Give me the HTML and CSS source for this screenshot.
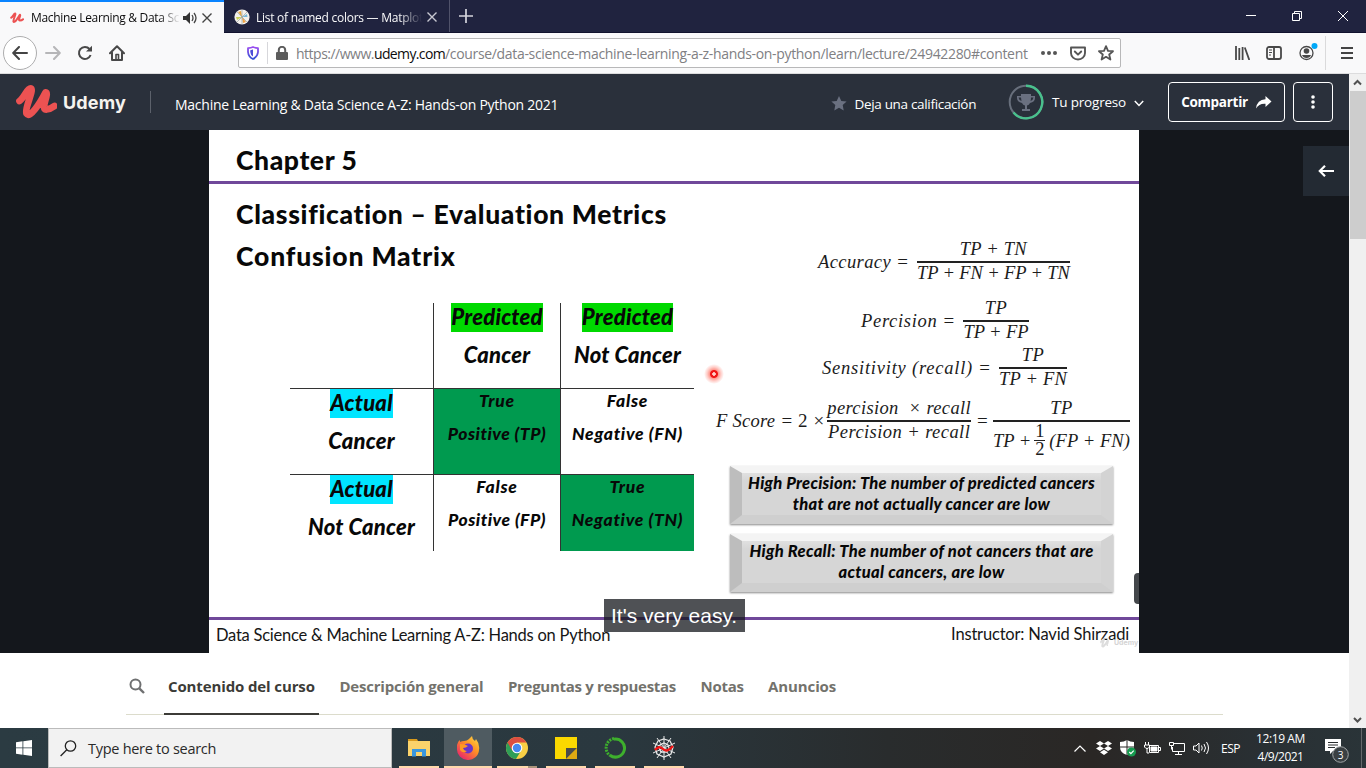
FILE: index.html
```html
<!DOCTYPE html>
<html lang="es">
<head>
<meta charset="utf-8">
<title>Machine Learning &amp; Data Science A-Z</title>
<link rel="stylesheet" href="styles.css">
</head>
<body>
<div class="screen">
  <div class="tabbar">
    <div class="tab active">
      <svg class="fav" width="14" height="12" viewBox="14 84 44 36"><path class="u-mark" d="M18 101C23 98 26 88 30 88C34 88 23 108 25 113C28 119 39 102 45 92C49 93 38 110 45 110C50 110 53 108 55 106"/></svg>
      <span class="tabname"><span class="t t-tab1">Machine Learning &amp; Data Sc</span></span>
      <svg class="snd" width="14" height="12" viewBox="0 0 14 12"><path d="M0 4h3l4-4v12l-4-4H0z" fill="#333"/><path d="M9 3q2 3 0 6M11 1q4 5 0 10" fill="none" stroke="#444" stroke-width="1.3"/></svg>
      <svg class="cls" width="10" height="10" viewBox="0 0 10 10"><path d="M.5.5l9 9M9.500 .5l-9 9" stroke="#444" stroke-width="1.4"/></svg>
    </div>
    <div class="tab second">
      <svg class="fav2" width="16" height="16" viewBox="0 0 16 16"><circle cx="8" cy="8" r="7.600" fill="#f4f1ec"/><path d="M8 8L4 3l3-1z" fill="#e9a33a"/><path d="M8 8l5-3 .5 3z" fill="#78b8d8"/><path d="M8 8l4 5-3 1z" fill="#f0a040"/><path d="M8 8l-5 3-1-3z" fill="#c9d25a"/><path d="M3 3l10 10M13 3L3 13M8 1v14" stroke="#8a9a9a" stroke-width=".6"/></svg>
      <span class="tabname"><span class="t t-tab2">List of named colors — Matplot</span></span>
      <svg class="cls" width="10" height="10" viewBox="0 0 10 10"><path d="M.5.5l9 9M9.500 .5l-9 9" stroke="#c8c8d2" stroke-width="1.4"/></svg>
    </div>
    <div class="plus"><svg width="14" height="14" viewBox="0 0 14 14"><path d="M7 0v14M0 7h14" stroke="#d5d5dd" stroke-width="1.700"/></svg></div>
    <div class="winctl">
      <svg width="10" height="10" viewBox="0 0 10 10"><path d="M0 4.500h10" stroke="#fff"/></svg>
      <svg width="10" height="10" viewBox="0 0 10 10" fill="none" stroke="#fff"><path d="M.5 2.500h7v7h-7zM2.500 2.500v-2h7v7h-2"/></svg>
      <svg width="10" height="10" viewBox="0 0 10 10"><path d="M0 0l10 10M10 0L0 10" stroke="#fff"/></svg>
    </div>
  </div>

  <div class="navbar">
    <div class="back"><svg width="16" height="14" viewBox="0 0 16 14" fill="none" stroke="#444" stroke-width="2" stroke-linecap="round" stroke-linejoin="round"><path d="M15 7H1.500M7 1L1.200 7L7 13"/></svg></div>
    <svg class="fwd" width="16" height="14" viewBox="0 0 16 14" fill="none" stroke="#b6b6b8" stroke-width="2" stroke-linecap="round" stroke-linejoin="round"><path d="M1 7h13.500M9 1l5.800 6L9 13"/></svg>
    <svg class="rel" width="16" height="16" viewBox="0 0 16 16" fill="none" stroke="#484848" stroke-width="2"><path d="M13.600 10A6 6 0 1 1 12.500 4"/><path d="M9 6.500h6V.8z" fill="#484848" stroke="none"/></svg>
    <svg class="home" width="16" height="16" viewBox="0 0 16 16" fill="none" stroke="#484848" stroke-width="2" stroke-linejoin="round" stroke-linecap="round"><path d="M1 8.200L8 1.200L15 8.200M3 7.500V15h10V7.500"/><path d="M7 14V9.500h2.500V14" stroke-width="1.600"/></svg>
    <div class="urlbar">
      <svg class="shield" width="12" height="14" viewBox="0 0 12 14"><defs><linearGradient id="sg" x2="0" y2="1"><stop stop-color="#9b4df0"/><stop offset="1" stop-color="#3251d4"/></linearGradient></defs><path d="M1 2.200Q4 1.800 6 1Q8 1.800 11 2.200V6Q10.500 11 6 13Q1.500 11 1 6z" fill="none" stroke="url(#sg)" stroke-width="1.800" stroke-linejoin="round"/><path d="M6 3.500v7Q3.500 9 3.300 6V4.200z" fill="#4c4cd8"/></svg>
      <i class="usep"></i>
      <svg class="lock" width="12" height="14" viewBox="0 0 12 14"><rect y="6" width="12" height="8" rx="1" fill="#5c5c5c"/><path d="M2.800 7V4a3.200 3.200 0 0 1 6.400 0v3" fill="none" stroke="#5c5c5c" stroke-width="2"/></svg>
      <div class="url"><span class="t t-u1">https://www.</span><span class="t t-u2">udemy.com</span><span class="t t-u3">/course/data-science-machine-learning-a-z-hands-on-python/learn/lecture/24942280#content</span></div>
      <svg class="dots" width="16" height="4" viewBox="0 0 16 4" fill="#555"><circle cx="2" cy="2" r="2"/><circle cx="8" cy="2" r="2"/><circle cx="14" cy="2" r="2"/></svg>
      <svg class="pocket" width="16" height="15" viewBox="0 0 16 15" fill="none" stroke="#555" stroke-width="1.900" stroke-linecap="round" stroke-linejoin="round"><path d="M1 1.500h14V7a7 6.500 0 0 1-14 0zM4.800 5.500L8 8.700l3.200-3.200"/></svg>
      <svg class="star" width="16" height="16" viewBox="0 0 16 16" fill="none" stroke="#555" stroke-width="1.800" stroke-linejoin="round"><path d="M8 1.200l2 4.600 5 .4-3.800 3.300 1.200 5L8 11.800 3.600 14.500l1.200-5L1 6.200l5-.4z"/></svg>
    </div>
    <div class="navicons">
      <svg width="15" height="14" viewBox="0 0 15 14" stroke="#484848" stroke-width="1.800"><path d="M1 0v14M4.300 2v12M7.600 1v13M9.800 1.500L14.300 14"/></svg>
      <svg width="16" height="14" viewBox="0 0 16 14" fill="none" stroke="#484848" stroke-width="1.800"><rect x="1" y="1" width="14" height="12" rx="2"/><path d="M8 1v12"/><path d="M3 4h3M3 6.500h3M3 9h2" stroke-width="1"/></svg>
      <svg width="20" height="18" viewBox="0 0 20 18"><circle cx="7.500" cy="10" r="6.500" fill="none" stroke="#484848" stroke-width="1.300"/><circle cx="7.500" cy="8" r="2.800" fill="#484848"/><path d="M3 12h9q-1 3-4.500 3T3 12z" fill="#484848"/><circle cx="15.500" cy="3" r="3" fill="#00a8f8"/></svg>
      <i class="nsep"></i>
      <svg width="12" height="12" viewBox="0 0 12 12"><path d="M0 1h12M0 6h12M0 11h12" stroke="#444" stroke-width="2"/></svg>
    </div>
  </div>

  <div class="viewport">
    <div class="page">
      <header class="head">
        <svg class="ulogo" width="42" height="36" viewBox="14 84 42 36"><path class="u-mark big" d="M18.500 101C23 98 26 88.500 29.500 88.500C34 88.500 23 109 25.500 113.500C29 119 39 103 44.500 92.500C49 93 38.500 110 45.500 109.500C49.500 109 51.500 107.500 53.500 106"/></svg>
        <span class="t t-logo">Udemy</span>
        <i class="hsep"></i>
        <span class="t t-course">Machine Learning &amp; Data Science A-Z: Hands-on Python 2021</span>
        <span class="grow"></span>
        <svg class="hstar" width="16" height="15" viewBox="0 0 16 15"><path d="M8 0l2.300 4.900 5.300.6-3.900 3.600 1 5.300L8 11.800l-4.700 2.600 1-5.300L.4 5.500l5.300-.6z" fill="#6a7080"/></svg>
        <span class="t t-rate">Deja una calificación</span>
        <svg class="prog" width="36" height="36" viewBox="0 0 36 36"><circle cx="18" cy="18" r="16.300" fill="none" stroke="#686f7c" stroke-width="2"/><path d="M18 1.700A16.300 16.300 0 1 1 5.500 28.500" fill="none" stroke="#49c18d" stroke-width="2.400"/><path d="M13 10h10v2h4v2q0 4-5 5-1 2-3 2.500V25h3v2h-8v-2h3v-3.500q-2-.5-3-2.500-5-1-5-5v-2h4zm0 3.500h-2.500q.3 2.500 3 3.500zm10 0q0 2-.5 3.500 2.700-1 3-3.500z" fill="#6a7080"/></svg>
        <span class="t t-prog">Tu progreso</span>
        <svg class="chev" width="10" height="7" viewBox="0 0 10 7"><path d="M.8 1L5 5.400 9.200 1" fill="none" stroke="#fff" stroke-width="1.500"/></svg>
        <div class="btn share"><span class="t t-share">Compartir</span><svg width="16" height="13" viewBox="0 0 16 13"><path d="M9.500 0L15.500 5.500 9.500 11V7.800Q3 7.300 0 12.500 1 3.500 9.500 3.200z" fill="#fff"/></svg></div>
        <div class="btn more"><svg width="4" height="14" viewBox="0 0 4 14" fill="#fff"><circle cx="2" cy="2" r="1.800"/><circle cx="2" cy="7" r="1.800"/><circle cx="2" cy="12" r="1.800"/></svg></div>
      </header>

      <section class="player">
        <div class="slide">
          <div class="slide-head"><span class="t t-ch">Chapter 5</span></div>
          <div class="slide-body">
            <div class="left">
              <h2><span class="t t-h1">Classification – Evaluation Metrics</span></h2>
              <h2><span class="t t-h2">Confusion Matrix</span></h2>
              <div class="matrix">
                <div class="c h"></div>
                <div class="c h vl"><span class="t hl green t-pred">Predicted</span><span class="t t-can">Cancer</span></div>
                <div class="c h vl"><span class="t hl green t-pred">Predicted</span><span class="t t-ncan">Not Cancer</span></div>
                <div class="c h hr"><span class="t hl cyan t-act">Actual</span><span class="t t-can">Cancer</span></div>
                <div class="c vl hr fill"><span class="t t-true">True</span><span class="t t-pos">Positive (TP)</span></div>
                <div class="c vl hr"><span class="t t-true">False</span><span class="t t-neg">Negative (FN)</span></div>
                <div class="c h hr"><span class="t hl cyan t-act">Actual</span><span class="t t-ncan">Not Cancer</span></div>
                <div class="c vl hr"><span class="t t-true">False</span><span class="t t-pos">Positive (FP)</span></div>
                <div class="c vl hr fill"><span class="t t-true">True</span><span class="t t-neg">Negative (TN)</span></div>
              </div>
            </div>
            <div class="right">
              <div class="eq e1"><span class="t t-acc">Accuracy</span><b>=</b><div class="fr"><span class="t t-n1">TP + TN</span><i></i><span class="t t-d1">TP + FN + FP + TN</span></div></div>
              <div class="eq e2"><span class="t t-per">Percision</span><b>=</b><div class="fr"><span class="t t-tp">TP</span><i></i><span class="t t-d2">TP + FP</span></div></div>
              <div class="eq e3"><span class="t t-sen">Sensitivity (recall)</span><b>=</b><div class="fr"><span class="t t-tp">TP</span><i></i><span class="t t-n1">TP + FN</span></div></div>
              <div class="eq e4"><span class="t t-fs">F Score</span><b>=</b><em class="two">2</em><em class="times">×</em><div class="fr"><span class="t t-pr">percision &nbsp;× recall</span><i></i><span class="t t-pr2">Percision + recall</span></div><b class="eq2">=</b><div class="fr"><span class="t t-tp">TP</span><i></i><div class="den"><span class="t t-tpp">TP +</span><div class="half"><span>1</span><i></i><span>2</span></div><span class="t t-fpfn">(FP + FN)</span></div></div></div>
              <div class="box"><span class="t t-b1">High Precision: The number of predicted cancers</span><span class="t t-b2">that are not actually cancer are low</span></div>
              <div class="box"><span class="t t-b2">High Recall: The number of not cancers that are</span><span class="t t-b2">actual cancers, are low</span></div>
            </div>
          </div>
          <div class="slide-foot"><span class="t t-f1">Data Science &amp; Machine Learning A-Z: Hands on Python</span><span class="t t-f2">Instructor: Navid Shirzadi</span></div>
          <span class="laser"></span>
          <span class="handle"></span>
          <span class="mark"><svg width="12" height="10" viewBox="14 84 42 36"><path class="u-wm" d="M18.500 101C23 98 26 88.500 29.500 88.500C34 88.500 23 109 25.500 113.500C29 119 39 103 44.500 92.500C49 93 38.500 110 45.500 109.500"/></svg>Udemy</span>
          <span class="caption">It's very easy.</span>
        </div>
        <div class="expand"><svg width="16" height="12" viewBox="0 0 16 12" fill="none" stroke="#fff" stroke-width="2.200"><path d="M16 6H2M7 .8L1.800 6 7 11.200"/></svg></div>
      </section>

      <nav class="ctabs">
        <svg class="mag" width="16" height="16" viewBox="0 0 16 16" fill="none" stroke="#6f7071"><circle cx="6.500" cy="6.500" r="5" stroke-width="2"/><path d="M10.300 10.300L15 15" stroke-width="2.400"/></svg>
        <span class="ct on"><span class="t t-c1">Contenido del curso</span></span>
        <span class="ct"><span class="t t-c2">Descripción general</span></span>
        <span class="ct"><span class="t t-c3">Preguntas y respuestas</span></span>
        <span class="ct"><span class="t t-c3">Notas</span></span>
        <span class="ct"><span class="t t-c1">Anuncios</span></span>
      </nav>
    </div>
    <div class="scroll">
      <svg width="17" height="17" viewBox="0 0 17 17"><path d="M5 10.500L8.500 7 12 10.500" fill="none" stroke="#505050" stroke-width="2"/></svg>
      <div class="thumb"></div>
      <svg width="17" height="17" viewBox="0 0 17 17"><path d="M5 7L8.500 10.500 12 7" fill="none" stroke="#505050" stroke-width="2"/></svg>
    </div>
  </div>

  <div class="taskbar">
    <div class="start"><svg width="16" height="16" viewBox="0 0 16 16" fill="#fff"><path d="M0 2.200L6.500 1.300V7.500H0zM7.300 1.200L16 0V7.500H7.300zM0 8.300H6.500V14.700L0 13.800zM7.300 8.300H16V16L7.300 14.800z"/></svg></div>
    <div class="search"><svg width="17" height="17" viewBox="0 0 17 17" fill="none" stroke="#222" stroke-width="1.300"><circle cx="10.500" cy="6" r="5.200"/><path d="M6.800 9.700L.6 16"/></svg><span class="t t-search">Type here to search</span></div>
    <div class="apps">
      <div class="app"><svg width="22" height="20" viewBox="0 0 22 20"><path d="M0 1h9l1 2H0z" fill="#d99a1c"/><path d="M0 3h22v15H0z" fill="#fbd36b"/><path d="M4 18.500V11h14v7.500h-4V14H8v4.500z" fill="#3a97dd"/></svg></div>
      <div class="app ff"><svg width="24" height="24" viewBox="0 0 24 24"><defs><linearGradient id="fg" x1="1" x2=".2" y2="1"><stop stop-color="#ffe14a"/><stop offset=".45" stop-color="#ff9324"/><stop offset="1" stop-color="#e81f70"/></linearGradient></defs><path d="M1 9Q2 5 4 4V6Q6 5 8 5Q11 5 13 3Q15 1 16 0Q16 3 19 5L20 3Q24 8 23 14A11 10.500 0 0 1 1 13z" fill="url(#fg)"/><circle cx="12" cy="12.500" r="5" fill="#6a35c8"/><path d="M4 8q5 0 8 2q-2 2-5 2q1 3 4 3-4 3-7-1z" fill="#ff9a22"/></svg></div>
      <div class="app two-w"><svg width="22" height="22" viewBox="0 0 22 22"><circle cx="11" cy="11" r="11" fill="#f9cf45"/><path d="M11 11L1.500 5.500A11 11 0 0 0 10 22L15.500 13z" fill="#2f9e57"/><path d="M20.500 5.500A11 11 0 0 0 1.500 5.500L6.400 14 11 5.500z" fill="#dc4e41"/><circle cx="11" cy="11" r="5.300" fill="#fff"/><circle cx="11" cy="11" r="4.200" fill="#4688f1"/></svg></div>
      <div class="app"><svg width="22" height="22" viewBox="0 0 22 22"><path d="M0 0h22v11L11 22H0z" fill="#fbd800"/><path d="M11 11h11L11 22z" fill="#4b4b4b"/><path d="M22 11v11H11z" fill="#dfa912"/></svg></div>
      <div class="app"><svg width="22" height="22" viewBox="0 0 22 22" fill="none" stroke="#3eb02d"><path d="M10 2.200a9 9 0 1 1-4 16" stroke-width="3"/><path d="M10 1.500A9.500 9.500 0 0 0 6 18.500" stroke-width="3" stroke-dasharray="2 1"/></svg></div>
      <div class="app"><svg width="24" height="24" viewBox="0 0 24 24" fill="none" stroke="#e8e8e8"><path d="M12 0v24M1 7l22 10M23 7L1 17M5 2l14 20M19 2L5 22" stroke-width="1"/><path d="M12 3l6 2 3 6-2 7-7 3-7-3-2-7 3-6zM12 7l4 2 1 3-2 4h-6l-2-4 1-3z" stroke-width="1.300"/><path d="M3 14q4-5 8-1t10-3" stroke="#f01414" stroke-width="2.400"/></svg></div>
    </div>
    <div class="tray">
      <svg width="12" height="7" viewBox="0 0 12 7"><path d="M.5 6.500L6 1l5.500 5.500" fill="none" stroke="#fff" stroke-width="1.200"/></svg>
      <svg width="16" height="14" viewBox="0 0 16 14" fill="#fff"><path d="M4 0l4 2.500L4 5 0 2.500zM12 0l4 2.500L12 5 8 2.500zM4 5l4 2.500L4 10 0 7.500zM12 5l4 2.500-4 2.500-4-2.500zM8 8.800l4 2.500L8 13.900l-4-2.600z"/></svg>
      <svg width="16" height="17" viewBox="0 0 16 17"><path d="M7 0q3 2 7 2v5q0 6-7 8Q0 13 0 7V2q4 0 7-2z" fill="#fff"/><path d="M7 0v15M0 7h14" stroke="#2a2826"/><circle cx="11.500" cy="12" r="4.500" fill="#169b4f"/><path d="M9.300 12l1.600 1.600 2.800-3" fill="none" stroke="#fff" stroke-width="1.200"/></svg>
      <svg width="17" height="12" viewBox="0 0 17 12" fill="none" stroke="#fff"><path d="M5.500 3.500h9v7h-9zM15 5.500h1.500v3H15"/><path d="M7 5h6v4H7z" fill="#fff"/><path d="M1.500 0v3M4.500 0v3M.5 3h5v2q-1 1.500-2.500 1.500T.5 5zM3 6v5h2"/></svg>
      <svg width="16" height="14" viewBox="0 0 16 14" fill="none" stroke="#fff"><path d="M5 2.500h10.500v8H3.500V6M9.500 10.500v3M6 13.500h7M.5 1.500h4v3h-4zM2.500 4.500v4"/></svg>
      <svg width="17" height="14" viewBox="0 0 17 14" fill="none" stroke="#fff"><path d="M.5 5h2.500l3-3v10l-3-3H.5zM8.500 4.500q1.500 2.500 0 5M11 3q3 4 0 8M13.500 1q4 6 0 12"/></svg>
      <span class="t t-esp">ESP</span>
      <div class="clock"><span class="t t-time">12:19 AM</span><span class="t t-esp2">4/9/2021</span></div>
      <svg class="notif" width="24" height="25" viewBox="0 0 24 25"><path d="M0 0h16v12H8l-3 3v-3H0z" fill="#fff"/><path d="M3 3.500h10M3 6h10M3 8.500h7" stroke="#2a2d2f"/><circle cx="15.500" cy="15.500" r="7.800" fill="#3a4043" stroke="#a0a4a6"/><text x="15.500" y="19.500" text-anchor="middle">3</text></svg>
      <i class="peek"></i>
    </div>
  </div>
</div>
</body>
</html>
```
FILE: styles.css
```css
* { box-sizing: border-box; }
body { margin: 0; font-family: "Open Sans", "Noto Sans", sans-serif; }
.screen { width: 1366px; height: 768px; display: flex; flex-direction: column; overflow: hidden; background: #fff; position: relative; }
svg { display: block; flex: none; }
.t { display: inline-block; white-space: nowrap; flex: none; }
.u-mark { fill: none; stroke: #ec5252; stroke-width: 6.500; stroke-linecap: round; stroke-linejoin: round; }
.u-mark.big { stroke-width: 6.800; }
.u-wm { fill: none; stroke: #ddd; stroke-width: 7; }

/* Browser tabs */
.tabbar { height: 33px; flex: none; background: #20233f; display: flex; border-bottom: 1px solid #11122e; }
.tab { display: flex; align-items: center; font-size: 12px; }
.active { width: 224px; height: 33px; background: #f9f9fa; border-top: 2px solid #0a84ff; padding: 0 0 0 10px; color: #0c0c0d; }
.second { width: 226px; padding: 2px 0 0 10px; color: #f9f9fa; border-right: 1px solid #50526a; }
.fav { margin-right: 7px; }
.fav2 { margin-right: 6px; }
.tabname { overflow: hidden; width: 149px; -webkit-mask-image: linear-gradient(90deg, #000 86%, transparent 100%); mask-image: linear-gradient(90deg, #000 86%, transparent 100%); }
.second .tabname { width: 166px; }
.t-tab1 { letter-spacing: -.32px; }
.t-tab2 { letter-spacing: -.26px; }
.snd { margin-left: 3px; }
.active .cls { margin-left: 5px; }
.second .cls { margin-left: 5px; }
.plus { padding: 9px 0 0 9px; }
.winctl { margin-left: auto; display: flex; gap: 36px; padding: 11px 18px 0 0; }

/* Browser toolbar */
.navbar { height: 41px; flex: none; background: #f9f9fa; display: flex; align-items: center; border-bottom: 1px solid #dcdcdd; padding-left: 3px; }
.back { width: 34px; height: 34px; border: 1px solid #adadae; border-radius: 50%; background: #fff; display: grid; place-items: center; }
.fwd { margin-left: 8px; }
.rel { margin-left: 16px; }
.home { margin-left: 16px; }
.urlbar { margin-left: 113px; width: 883px; height: 30px; border: 1px solid #b8b8b9; border-radius: 2px; background: #fff; display: flex; align-items: center; padding-left: 8px; }
.usep { width: 1px; height: 22px; background: #d7d7db; margin: 0 8px; }
.url { font-size: 14px; color: #808083; margin-left: 8px; display: flex; width: 745px; }
.t-u1 { letter-spacing: -.5px; }
.t-u2 { color: #0c0c0d; letter-spacing: -.64px; }
.t-u3 { letter-spacing: -.33px; }
.pocket { margin-left: 13px; }
.star { margin-left: 12px; }
.navicons { display: flex; align-items: center; margin-left: 114px; }
.navicons svg:nth-child(2) { margin-left: 16px; }
.navicons svg:nth-child(3) { margin: 0 0 3px 17px; }
.nsep { width: 1px; height: 34px; background: #dadadb; margin: 0 15px 0 6px; }

/* Course header */
.viewport { display: flex; height: 654px; flex: none; }
.page { width: 1349px; }
.head { height: 56px; background: #2a303b; display: flex; align-items: center; color: #fff; padding-left: 15px; font-size: 13.500px; }
.t-logo { font: bold 18px "Inter", sans-serif; color: #f5f3ee; margin-left: 6px; letter-spacing: .16px; }
.hsep { width: 1px; height: 22px; background: #5c616b; margin: 0 24px; }
.t-course { margin-top: 5px; font-size: 14px; letter-spacing: -.26px; }
.grow { flex: 1; }
.hstar { margin-right: 7px; margin-top: 2px; }
.t-rate { margin-top: 4px; letter-spacing: -.32px; }
.t-prog { letter-spacing: -.2px; }
.prog { margin: 0 8px 0 32px; }
.chev { margin: 2px 24px 0 8px; }
.btn { border: 1px solid #fff; border-radius: 4px; height: 40px; display: flex; align-items: center; justify-content: center; }
.share { width: 117px; font-weight: 700; gap: 8px; margin-right: 8px; }
.t-share { letter-spacing: -.27px; }
.more { width: 40px; margin-right: 16px; }

/* Lecture slide */
.player { height: 523px; background: #14171c; position: relative; padding-left: 209px; }
.slide { width: 930px; height: 523px; background: #fff; position: relative; color: #080808; }
.slide-head { height: 54px; border-bottom: 3px solid #70489a; padding: 12px 0 0 27px; font: 900 26.500px/36px "Lato", sans-serif; }
.slide-body { display: flex; height: 433px; }
.left { width: 507px; padding-top: 9px; }
.left h2 { margin: 0 0 0 27px; font: 900 26.500px/42px "Lato", sans-serif; }
.t-ch { letter-spacing: .6px; }
.t-h1 { letter-spacing: .68px; }
.t-h2 { letter-spacing: .83px; }
.matrix { margin: 26px 0 0 81px; display: grid; grid-template-columns: 143px 127px 134px; grid-template-rows: 85px 86px 77px; font: italic 900 17.500px/33px "Lato", sans-serif; }
.c { display: flex; flex-direction: column; align-items: center; }
.c.h { font-size: 22px; }
.c.h .t { line-height: 29px; letter-spacing: .22px; }
.c.h .hl { line-height: 27px; padding-bottom: 2px; }
.c.h .hl + .t { margin-top: 8px; }
.vl { border-left: 1px solid #333; }
.hr { border-top: 1px solid #333; }
.c:not(.h) .t:first-child { line-height: 24px; }
.c:not(.h) .t + .t { line-height: 41px; }
.t-true { letter-spacing: .78px; }
.t-pos { letter-spacing: .5px; }
.t-neg { letter-spacing: .7px; }
.green { background: #00d900; }
.cyan { background: #00e5ff; }
.fill { background: #009a4f; }

/* Formulas */
.right { width: 423px; padding-top: 51px; font: italic 18.500px/22px "Liberation Serif", serif; color: #1c1c1c; }
.eq { display: flex; align-items: center; }
.eq b, .eq em { font-style: normal; font-weight: 400; display: block; width: 11px; text-align: center; font-size: 19px; margin-left: 6px; }
.e1 { height: 53px; padding-left: 102px; }
.e2 { height: 65px; padding-left: 145px; }
.e3 { height: 29px; padding-left: 106px; }
.e4 { height: 84px; padding: 0 0 7px; }
.fr { display: grid; grid-template-rows: 36px 2px 36px; justify-items: center; margin: 0 0 0 9px; }
.fr > i { background: #222; width: 100%; }
.fr > span:first-child { align-self: end; line-height: 24px; }
.fr > span:last-child { line-height: 20px; }
.eq em.two, .eq em.times { margin-left: 5px; }
.e4 .times + .fr { margin-left: 3px; }
.e4 .fr:last-child { margin-left: 5px; }
.t-acc { letter-spacing: .4px; }
.t-n1 { letter-spacing: .2px; }
.t-d1 { letter-spacing: -.14px; }
.t-per { letter-spacing: .69px; }
.t-tp { letter-spacing: .4px; }
.t-d2 { letter-spacing: -.07px; }
.t-sen { letter-spacing: .78px; }
.t-fs { letter-spacing: .28px; }
.t-pr { letter-spacing: .35px; }
.t-pr2 { letter-spacing: .43px; }
.t-fpfn { letter-spacing: .07px; }
.den { display: flex; align-items: center; height: 38px; }
.half { display: flex; flex-direction: column; align-items: center; font-style: normal; line-height: 17px; width: 11px; margin: 0 4px 0 3px; }
.half i { width: 11px; height: 1px; background: #222; }

/* Bevelled notes */
.box { margin: 0 0 10px 14px; width: 383px; height: 58px; border: solid; border-width: 7px 12px 9px; border-color: #f4f4f4 #d3d3d3 #cfcfcf #bdbdbd; background: linear-gradient(#e0e0e0, #d6d6d6 8px); box-shadow: 0 1px 2px #888; display: flex; flex-direction: column; align-items: center; font: italic 900 16.500px/21px "Lato", sans-serif; color: #080808; }
.t-b1 { letter-spacing: .25px; }
.t-b2 { letter-spacing: .31px; }
.slide-foot { border-top: 3px solid #70489a; height: 36px; display: flex; justify-content: space-between; padding: 2px 10px 0 7px; font: 16.500px/27px "Lato", sans-serif; color: #161616; }
.t-f1 { letter-spacing: -.24px; }
.t-f2 { margin-top: -1px; letter-spacing: -.18px; }
.laser { position: absolute; left: 495px; top: 234px; width: 20px; height: 20px; border-radius: 50%; background: radial-gradient(circle, #ffd0c8 0 1.500px, #f01414 2px 3.500px, #ff9a90 4.500px, rgba(255,160,150,.5) 7px, transparent 10px); }
.handle { position: absolute; right: 0; top: 443px; width: 5px; height: 31px; background: #44474b; border-radius: 4px 0 0 4px; }
.mark { position: absolute; left: 890px; top: 508px; display: flex; align-items: center; gap: 3px; font: bold 7px/10px "Inter", sans-serif; color: #d4d4d4; }
.caption { position: absolute; left: 395px; top: 469px; width: 141px; height: 33px; background: rgba(20,23,28,.75); color: #fff; font: 21px/33px "Liberation Sans", sans-serif; padding-left: 7px; }
.expand { position: absolute; right: 0; top: 16px; width: 46px; height: 50px; background: #232a33; display: grid; place-items: center; }

/* Course tabs */
.ctabs { height: 62px; margin: 0 126px; border-bottom: 1px solid #dcdccc; display: flex; font-weight: 700; font-size: 15px; color: #73726c; padding-left: 4px; }
.mag { margin: 25px 18px 0 -1px; }
.ct { padding: 0 4px; margin-right: 16.500px; height: 62px; line-height: 67px; }
.ct:nth-child(2) { margin-left: 1px; }
.on { border-bottom: 2px solid #3c3b37; color: #3c3b37; }
.t-c1 { letter-spacing: -.12px; }
.t-c2 { letter-spacing: -.2px; }
.t-c3 { letter-spacing: -.29px; }
.scroll { width: 17px; background: #f0f0f0; display: flex; flex-direction: column; }
.thumb { height: 148px; background: #cdcdcd; margin: 0 0 auto 1px; }

/* Taskbar */
.taskbar { height: 40px; flex: none; display: flex; background: linear-gradient(90deg, #2b3b42, #2a383f 45%, #292c2d 65%, #2a2725 80%, #293034 93%, #2a3438); color: #fff; }
.start { width: 48px; display: grid; place-items: center; }
.search { width: 344px; background: #f2f2f2; border: 1px solid #bbb; display: flex; align-items: center; color: #2a2a2a; font-size: 14.500px; padding-left: 11px; gap: 11px; }
.t-search { letter-spacing: -.28px; }
.apps { display: flex; margin-left: 3px; gap: 1px; }
.app { width: 48px; display: grid; place-items: center; position: relative; }
.app::after { content: ""; position: absolute; left: 4px; right: 4px; bottom: 0; height: 2px; background: #ffd9ac; }
.ff { background: #4f5b61; }
.ff::after { left: 0; right: 0; }
.two-w::after { background: linear-gradient(90deg, #ffd9ac 78%, #ab957c 78%); }
.tray { margin-left: auto; display: flex; align-items: center; font-size: 12px; }
.tray > svg { margin-right: 8px; }
.tray > svg:first-child { margin-right: 10px; }
.t-esp { margin: 0 16px 0 3px; letter-spacing: -.49px; }
.t-esp2 { letter-spacing: -.5px; }
.t-time { letter-spacing: -.39px; }
.clock { display: flex; flex-direction: column; align-items: center; line-height: 18px; width: 49px; }
.tray > .notif { margin: 6px 12px 0 20px; }
.notif text { font: 10px "Open Sans", sans-serif; fill: #fff; }
.peek { width: 1px; height: 40px; background: #64696b; margin-right: 4px; }
```
